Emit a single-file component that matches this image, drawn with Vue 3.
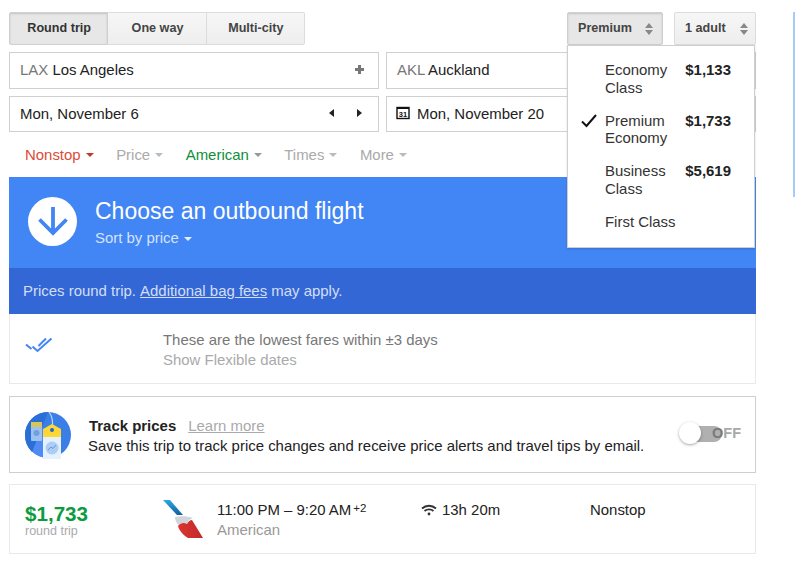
<script setup>
const classes = [
  { name: 'Economy Class', price: '$1,133' },
  { name: 'Premium Economy', price: '$1,733', checked: true },
  { name: 'Business Class', price: '$5,619' },
  { name: 'First Class', price: '' },
]
const filters = [
  { label: 'Nonstop', kind: 'red' },
  { label: 'Price', kind: '' },
  { label: 'American', kind: 'green' },
  { label: 'Times', kind: '' },
  { label: 'More', kind: '' },
]
</script>

<template>
  <div class="page">
    <div class="stripe"></div>
    <div class="toprow">
      <div class="segmented">
        <div class="seg active">Round trip</div>
        <div class="seg">One way</div>
        <div class="seg">Multi-city</div>
      </div>
      <div class="selects">
        <div class="sel premium pressed">
          <span>Premium</span>
          <span class="updown"><i class="up"></i><i class="down"></i></span>
        </div>
        <div class="sel adult">
          <span>1 adult</span>
          <span class="updown"><i class="up"></i><i class="down"></i></span>
        </div>
      </div>
    </div>

    <div class="fields">
      <div class="field place">
        <span><span class="code">LAX</span> Los Angeles</span>
        <svg class="plus" width="9" height="9" viewBox="0 0 9 9"><path d="M3 0h3v3h3v3H6v3H3V6H0V3h3z" fill="#777"/></svg>
      </div>
      <div class="field place"><span><span class="code">AKL</span> Auckland</span></div>
      <div class="field date">
        <span>Mon, November 6</span>
        <span class="steppers">
          <svg width="6" height="8" viewBox="0 0 6 8"><path d="M5 0v8L0 4z" fill="#222"/></svg>
          <svg width="6" height="8" viewBox="0 0 6 8"><path d="M1 0v8l5-4z" fill="#222"/></svg>
        </span>
      </div>
      <div class="field date ret">
        <svg width="14" height="14" viewBox="0 0 14 14" class="cal">
          <rect x="1" y="1.500" width="12" height="11" fill="#fff" stroke="#111" stroke-width="1.400"/>
          <rect x="1" y="1" width="12" height="2" fill="#111"/>
          <text x="7" y="10.600" font-size="7.500" font-weight="bold" text-anchor="middle" font-family="Liberation Sans" fill="#111">31</text>
        </svg>
        <span>Mon, November 20</span>
      </div>
    </div>

    <div class="filters">
      <div v-for="f in filters" :key="f.label" class="filter" :class="f.kind">
        {{ f.label }}<i class="caret"></i>
      </div>
    </div>

    <div class="hero">
      <div class="circle">
        <svg width="30" height="30" viewBox="0 0 30 30">
          <path d="M15 1V27M1.500 13.500 15 27 28.500 13.500" fill="none" stroke="#4285f4" stroke-width="3.800"/>
        </svg>
      </div>
      <div class="hero-text">
        <div class="hero-title">Choose an outbound flight</div>
        <div class="hero-sort">Sort by price<i class="caret white"></i></div>
      </div>
    </div>
    <div class="notice">Prices round trip. <a>Additional bag fees</a> may apply.</div>

    <div class="card flex-dates">
      <svg class="ticks" width="28" height="16" viewBox="0 0 28 16">
        <path d="M1 7.500 6.500 12M7.500 9.500 12.500 14 26.500 1.500M13.500 9 21 1.500" fill="none" stroke="#4285f4" stroke-width="2"/>
      </svg>
      <div class="flex-text">
        <div class="lowest">These are the lowest fares within ±3 days</div>
        <div class="show">Show Flexible dates</div>
      </div>
    </div>

    <div class="track">
      <svg class="tag" width="48" height="50" viewBox="0 0 48 50">
        <circle cx="24" cy="24" r="23" fill="#3b7ee8"/>
        <path d="M24 47A23 23 0 0 1 4 35L19 17 37 38V43A23 23 0 0 1 24 47Z" fill="#4f8af5"/>
        <path d="M1 24A23 23 0 0 1 24 1L8 41A23 23 0 0 1 1 24Z" fill="#2a6fd6"/>
        <path d="M25 1c3 4 4 7 3.500 13" fill="none" stroke="#b5dcf5" stroke-width="1.200"/>
        <rect x="7" y="11" width="11" height="6" fill="#d8c65a"/>
        <rect x="7" y="16" width="11" height="14" rx="1" fill="#9cc3ef"/>
        <circle cx="12.500" cy="22" r="3" fill="#6f9fe3"/>
        <path d="M19 36V18l9-5 9 5v18z" fill="#fdd835"/>
        <rect x="19" y="26" width="18" height="22" fill="#e3f2fd"/>
        <circle cx="28" cy="19" r="2" fill="#1f66cf"/>
        <circle cx="28" cy="37" r="6.500" fill="#aecdf5"/>
        <path d="M24 39l3-3 2 1.500 3-3.500" fill="none" stroke="#5f97e6" stroke-width="1"/>
      </svg>
      <div class="track-text">
        <div class="track-head"><b>Track prices</b><a>Learn more</a></div>
        <div class="track-desc">Save this trip to track price changes and receive price alerts and travel tips by email.</div>
      </div>
      <div class="switch">
        <div class="bar"></div>
        <div class="knob"></div>
        <span class="off"><span class="o">O</span>FF</span>
      </div>
    </div>

    <div class="card result">
      <div class="price-col">
        <div class="price">$1,733</div>
        <div class="rt">round trip</div>
      </div>
      <svg class="logo" width="42" height="40" viewBox="0 0 42 40">
        <defs>
          <linearGradient id="wingBlue" x1="0" y1="0" x2="0" y2="1">
            <stop offset="0" stop-color="#2aa9e0"/>
            <stop offset="1" stop-color="#12609f"/>
          </linearGradient>
          <linearGradient id="wingRed" x1="0" y1="0" x2="1" y2="0">
            <stop offset="0" stop-color="#da352d"/>
            <stop offset="1" stop-color="#c22a2e"/>
          </linearGradient>
        </defs>
        <path d="M1 1H8L21 16H15Z" fill="url(#wingBlue)"/>
        <path d="M13 18C18 17 26 17 31 19C28 20 26 22 25 25C22 23 18 24 16 26C14 23 13 20 13 18Z" fill="#cfd5da"/>
        <path d="M16 27C18 24 22 23 25 25C26 23 28 21 30 21L41 39H26C21 36 17 31 16 27Z" fill="url(#wingRed)"/>
      </svg>
      <div class="times">
        <div class="time">11:00 PM – 9:20 AM<sup>+2</sup></div>
        <div class="airline">American</div>
      </div>
      <div class="duration">
        <svg width="16" height="12" viewBox="0 0 16 12">
          <path d="M1 4.500C5 .8 11 .8 15 4.500M3.500 7C6 4.800 10 4.800 12.500 7" fill="none" stroke="#333" stroke-width="1.800"/>
          <circle cx="8" cy="10" r="1.400" fill="#333"/>
        </svg>
        <span>13h 20m</span>
      </div>
      <div class="stops">Nonstop</div>
    </div>

    <div class="menu">
      <div v-for="c in classes" :key="c.name" class="menu-item">
        <svg v-if="c.checked" class="check" width="16" height="14" viewBox="0 0 16 14">
          <path d="M1 7.500 5.500 12 15 1" fill="none" stroke="#111" stroke-width="2"/>
        </svg>
        <span class="menu-name">{{ c.name }}</span>
        <span class="menu-price">{{ c.price }}</span>
      </div>
    </div>
  </div>
</template>

<style>
html, body { margin: 0; background: #fff; }
</style>

<style scoped>
.page {
  position: relative;
  box-sizing: border-box;
  width: 795px;
  height: 561px;
  overflow: hidden;
  padding: 12px 39px 0 9px;
  font-family: "Liberation Sans", Arial, sans-serif;
  font-size: 14.950px;
  color: #222;
}
.stripe {
  position: absolute;
  left: 793px;
  top: 12px;
  width: 2px;
  height: 185px;
  background: #a6cbfa;
}
.toprow { display: flex; justify-content: space-between; height: 33px; }
.segmented { display: flex; width: 296px; }
.seg {
  flex: 1;
  display: flex;
  align-items: center;
  justify-content: center;
  padding-left: 1px;
  background: linear-gradient(#f6f6f6, #eeeeee);
  border: 1px solid #dcdcdc;
  border-left: 0;
  font-size: 12.600px;
  font-weight: bold;
  color: #444;
  padding-bottom: 2px;
}
.seg:first-child { border-left: 1px solid #dcdcdc; border-radius: 2px 0 0 2px; }
.seg:last-child { border-radius: 0 2px 2px 0; }
.seg.active {
  background: #e7e7e7;
  border-color: #cfcfcf;
  box-shadow: inset 0 1px 2px rgba(0,0,0,.15);
  color: #333;
}
.selects { display: flex; gap: 11px; }
.sel {
  box-sizing: border-box;
  display: flex;
  align-items: center;
  justify-content: space-between;
  padding: 0 7px 2px 10px;
  background: linear-gradient(#f6f6f6, #eeeeee);
  border: 1px solid #dcdcdc;
  border-radius: 2px;
  font-size: 12.600px;
  font-weight: bold;
  color: #444;
}
.premium { width: 96px; padding-right: 9px; }
.adult { width: 82px; }
.sel.pressed {
  background: #e7e7e7;
  border-color: #cfcfcf;
  box-shadow: inset 0 1px 2px rgba(0,0,0,.15);
}
.updown { display: flex; flex-direction: column; gap: 2px; margin-top: 2px; }
.updown i { display: block; width: 0; height: 0; border-left: 4.500px solid transparent; border-right: 4.500px solid transparent; }
.updown .up { border-bottom: 5px solid #888; }
.updown .down { border-top: 5px solid #888; }

.fields {
  display: grid;
  grid-template-columns: 370px 370px;
  column-gap: 7px;
  row-gap: 7px;
  margin-top: 7px;
}
.field {
  box-sizing: border-box;
  display: flex;
  align-items: center;
  justify-content: space-between;
  padding: 0 14px 2px 10px;
  border: 1px solid #d0d0d0;
  background: #fff;
}
.place { height: 37px; }
.date { height: 36px; }
.code { color: #777; }
.steppers { display: flex; gap: 21px; margin-right: 2px; }
.ret { justify-content: flex-start; gap: 7px; padding-left: 9px; }
.filters {
  display: flex;
  gap: 22.500px;
  height: 45px;
  align-items: center;
  padding: 0 16px;
  box-sizing: border-box;
}
.filter { color: #aaa; display: flex; align-items: center; }
.filter.red { color: #dd4b39; }
.filter.green { color: #0e8f3c; }
.caret {
  display: inline-block;
  width: 0;
  height: 0;
  margin-left: 5px;
  border-left: 4px solid transparent;
  border-right: 4px solid transparent;
  border-top: 4px solid #bbb;
}
.red .caret { border-top-color: #c0392b; }
.green .caret { border-top-color: #999; }
.caret.white { border-top-color: #e5eefd; vertical-align: middle; }

.hero {
  display: flex;
  align-items: center;
  gap: 18px;
  height: 91px;
  padding: 0 0 3px 19px;
  box-sizing: border-box;
  background: #4285f4;
  color: #fff;
}
.circle {
  width: 49px;
  height: 49px;
  border-radius: 50%;
  background: #fff;
  display: flex;
  align-items: center;
  justify-content: center;
}
.hero-text { padding-top: 1px; }
.hero-title { font-size: 23px; line-height: 27px; }
.hero-sort { color: #d5e3fc; margin-top: 4px; }
.notice {
  height: 46px;
  box-sizing: border-box;
  padding: 0 0 2px 14px;
  display: flex;
  align-items: center;
  white-space: pre;
  background: #3367d6;
  color: #d3def6;
}
.notice a { text-decoration: underline; }
.card {
  box-sizing: border-box;
  border: 1px solid #e9e9e9;
  display: flex;
}
.flex-dates {
  height: 70px;
  border-top: 0;
  position: relative;
  padding-left: 15px;
  padding-top: 16px;
}
.ticks { margin-top: 7px; flex: none; }
.flex-text { margin-left: 110px; }
.lowest { color: #777; line-height: 19px; }
.show { color: #aaa; line-height: 21px; }
.track {
  margin-top: 12px;
  height: 77px;
  box-sizing: border-box;
  border: 1px solid #cfcfcf;
  display: flex;
  align-items: center;
  padding-left: 14px;
  padding-top: 2px;
  position: relative;
}
.tag { flex: none; }
.track-text { margin-left: 16px; }
.track-head { display: flex; gap: 12px; line-height: 20px; margin-left: 1px; }
.track-head a { color: #aaa; text-decoration: underline; }
.track-desc { line-height: 20px; }
.switch {
  position: absolute;
  left: 669px;
  top: 25px;
  width: 66px;
  height: 24px;
}
.bar { position: absolute; left: 6px; top: 4px; width: 37px; height: 16px; border-radius: 0 8px 8px 0; background: #b0b0b0; }
.knob { position: absolute; left: 0; top: 0; width: 22px; height: 22px; border-radius: 50%; background: #fff; box-shadow: 0 1px 3px rgba(0,0,0,.35); }
.off { position: absolute; left: 33px; top: 3px; font-size: 14.500px; font-weight: bold; color: #a8a8a8; }
.o { color: #7a7a7a; }
.result {
  margin-top: 11px;
  height: 70px;
  position: relative;
  align-items: flex-start;
  padding: 16px 0 0 15px;
}
.price-col { width: 137px; flex: none; }
.price { font-size: 20.600px; font-weight: bold; color: #0b9c40; line-height: 25px; }
.rt { font-size: 12.500px; color: #aaa; line-height: 14px; margin-top: -2px; }
.logo { flex: none; margin-top: -2px; }
.times { margin-left: 13px; width: 204px; flex: none; line-height: 20px; margin-top: -1px; }
.time sup { font-size: 11.500px; line-height: 0; vertical-align: 3px; margin-left: 2px; }
.airline { color: #999; }
.duration { display: flex; align-items: center; gap: 5px; width: 169px; flex: none; }
.stops { flex: none; }
.menu {
  position: absolute;
  left: 567px;
  top: 45px;
  width: 188px;
  height: 203px;
  box-sizing: border-box;
  background: #fff;
  border: 1px solid #cfcfcf;
  box-shadow: 0 1px 2px rgba(0,0,0,.15);
  padding-top: 15px;
}
.menu-item {
  position: relative;
  display: flex;
  justify-content: space-between;
  padding: 0 23px 0 37px;
  line-height: 17.600px;
  margin-bottom: 15.400px;
  color: #333;
}
.menu-name { width: 80px; }
.menu-price { font-weight: bold; color: #222; }
.check { position: absolute; left: 13px; top: 2px; }
</style>
